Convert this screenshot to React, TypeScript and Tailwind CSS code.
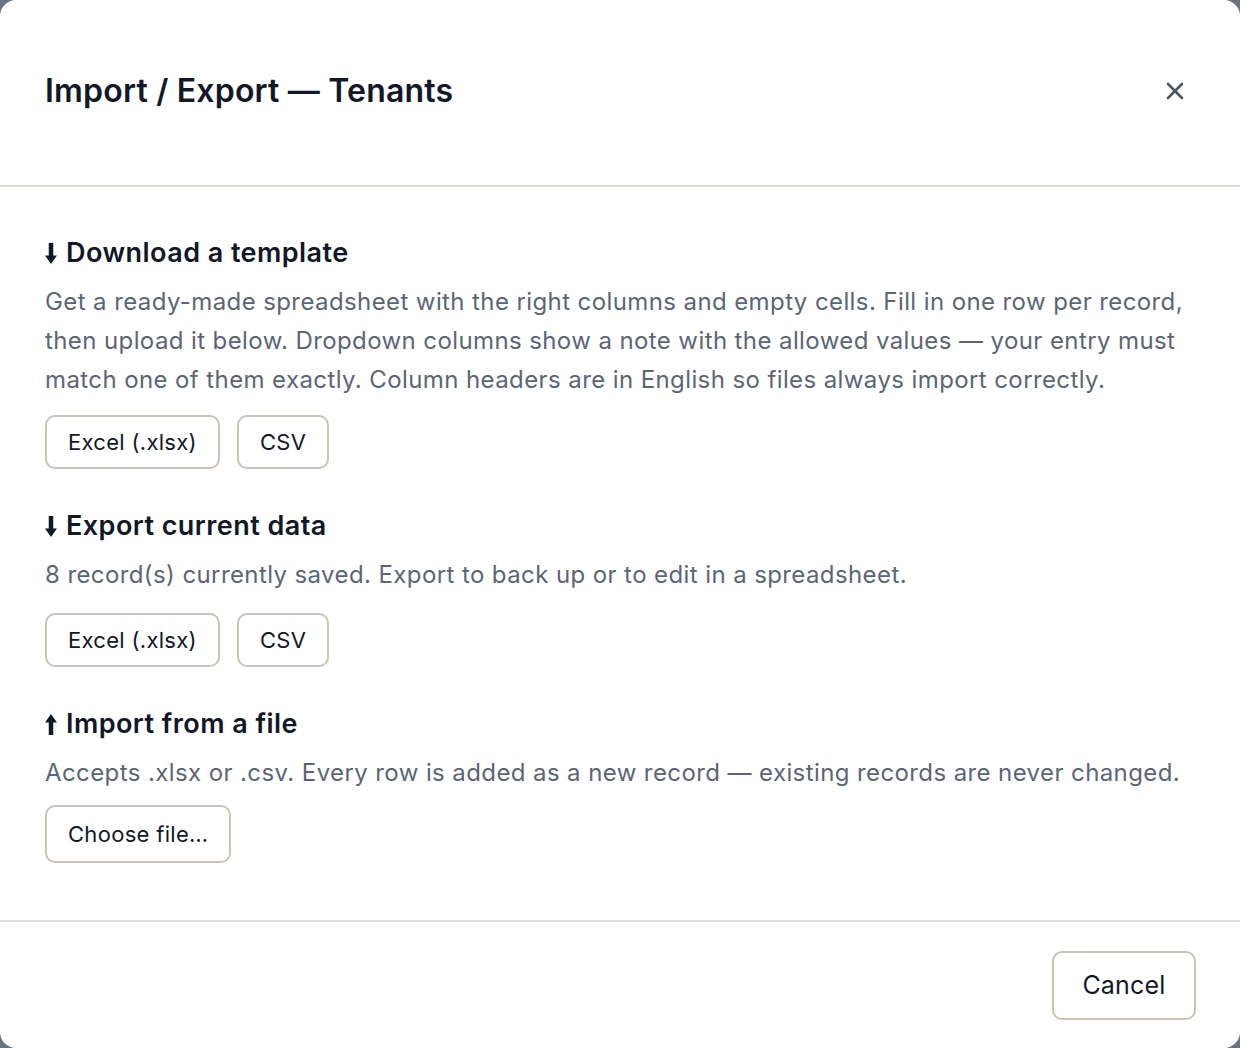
import React from 'react';

const font = { fontFamily: 'Inter, "Noto Sans", sans-serif' };

const ArrowIcon: React.FC<{ up?: boolean }> = ({ up }) => (
  <svg width="12" height="21" viewBox="0 0 12 21" className={`mr-[9px] shrink-0 ${up ? 'rotate-180' : ''}`}>
    <rect x="3.75" y="0" width="4.5" height="14" fill="#111827" />
    <polygon points="0,12.5 12,12.5 6,21" fill="#111827" />
  </svg>
);

const OutlineButton: React.FC<{ label: string }> = ({ label }) => (
  <button
    type="button"
    className="h-[54px] px-[21px] rounded-[10px] border-2 border-[#cbc3b6] bg-white text-[22px] tracking-[0.3px] text-[#111827] leading-none"
  >
    {label}
  </button>
);

const Section: React.FC<{ title: string; up?: boolean; children: React.ReactNode }> = ({ title, up, children }) => (
  <div className="flex flex-col">
    <h3 className="flex items-center text-[27px] font-semibold tracking-[0.45px] text-[#111827] leading-[32px]">
      <ArrowIcon up={up} />
      {title}
    </h3>
    {children}
  </div>
);

const bodyText = 'mt-[13px] text-[24px] tracking-[0.4px] leading-[39px] text-[#5b6675]';

const App: React.FC = () => {
  return (
    <div className="min-h-screen bg-[#6b7280]" style={font}>
      <div className="w-[1240px] h-[1048px] bg-white rounded-[16px] flex flex-col overflow-hidden">
        {/* 헤더 */}
        <div className="h-[187px] border-b-2 border-[#e4dfd3] flex items-center justify-between pl-[45px] pr-[56px] pb-[4px] shrink-0">
          <h2 className="text-[32px] font-semibold text-[#111827] tracking-[0.2px]">Import / Export — Tenants</h2>
          <button type="button" className="text-[#4b5563]">
            <svg width="18" height="18" viewBox="0 0 18 18" stroke="currentColor" strokeWidth="2.6" strokeLinecap="round">
              <line x1="2" y1="2" x2="16" y2="16" />
              <line x1="16" y1="2" x2="2" y2="16" />
            </svg>
          </button>
        </div>

        {/* 본문 */}
        <div className="flex-1 flex flex-col gap-[41px] px-[45px] pt-[50px]">
          <Section title="Download a template">
            <p className={bodyText}>
              Get a ready-made spreadsheet with the right columns and empty cells. Fill in one row per record, then upload it below. Dropdown columns show a note with the allowed values — your entry must match one of them exactly. Column headers are in English so files always import correctly.
            </p>
            <div className="flex gap-[17px] mt-[16px]">
              <OutlineButton label="Excel (.xlsx)" />
              <OutlineButton label="CSV" />
            </div>
          </Section>

          <Section title="Export current data">
            <p className={bodyText}>
              8 record(s) currently saved. Export to back up or to edit in a spreadsheet.
            </p>
            <div className="flex gap-[17px] mt-[19px]">
              <OutlineButton label="Excel (.xlsx)" />
              <OutlineButton label="CSV" />
            </div>
          </Section>

          <Section title="Import from a file" up>
            <p className={bodyText}>
              Accepts .xlsx or .csv. Every row is added as a new record — existing records are never changed.
            </p>
            <div className="flex mt-[13px]">
              <button
                type="button"
                className="h-[58px] px-[21px] rounded-[10px] border-2 border-[#cbc3b6] bg-white text-[22px] tracking-[0.3px] text-[#111827] leading-none"
              >
                Choose file…
              </button>
            </div>
          </Section>
        </div>

        {/* 푸터 */}
        <div className="h-[128px] border-t-2 border-[#e4dfd3] flex items-start justify-end pt-[29px] pr-[44px] shrink-0">
          <button
            type="button"
            className="h-[69px] w-[144px] rounded-[10px] border-2 border-[#cbc3b6] bg-white text-[25px] tracking-[0.2px] text-[#111827] leading-none"
          >
            Cancel
          </button>
        </div>
      </div>
    </div>
  );
};

export default App;
